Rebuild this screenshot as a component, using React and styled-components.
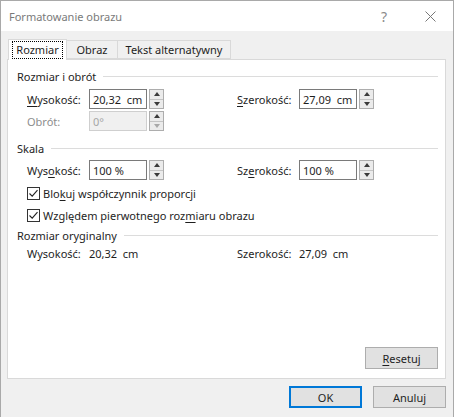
import React from 'react';
import styled, { createGlobalStyle } from 'styled-components';

const GlobalStyle = createGlobalStyle`
  html, body { margin: 0; padding: 0; background: #f0f0f0; }
  body { font-family: 'Noto Sans', 'Open Sans', sans-serif; font-size: 11px; color: #1e1e1e; }
`;

const Dialog = styled.div`
  width: 454px;
  height: 417px;
  box-sizing: border-box;
  border: 1px solid #a9a9a9;
  border-bottom: none;
  background: #f0f0f0;
  display: flex;
  flex-direction: column;
`;

const TitleBar = styled.div`
  height: 30px;
  background: #fff;
  display: flex;
  align-items: center;
  padding-left: 8px;
  color: #7a7a7a;
  font-size: 11px;
`;

const Title = styled.div`
  flex: 1;
`;

const TitleButton = styled.div`
  width: 46px;
  height: 30px;
  display: flex;
  align-items: center;
  justify-content: center;
  color: #8a8a8a;
  font-size: 14px;
`;

const Body = styled.div`
  flex: 1;
  padding: 7px 7px 0 6px;
  display: flex;
  flex-direction: column;
`;

const TabStrip = styled.div`
  display: flex;
  height: 21px;
  align-items: flex-end;
  padding-left: 1px;
`;

const Tab = styled.div`
  width: ${p => p.$w}px;
  height: ${p => (p.$active ? 21 : 19)}px;
  box-sizing: border-box;
  background: ${p => (p.$active ? '#fff' : '#f0f0f0')};
  border: 1px solid #d9d9d9;
  border-bottom: ${p => (p.$active ? 'none' : '1px solid #d9d9d9')};
  margin-left: ${p => (p.$active ? 0 : -1)}px;
  display: flex;
  align-items: center;
  justify-content: center;
  position: relative;
  z-index: ${p => (p.$active ? 1 : 0)};
  margin-bottom: ${p => (p.$active ? -1 : 0)}px;
`;

const FocusText = styled.span`
  outline: 1px dotted #000;
  padding: 0 3px;
  line-height: 16px;
`;

const Panel = styled.div`
  height: 320px;
  box-sizing: border-box;
  background: #fff;
  border: 1px solid #d9d9d9;
  padding: 8px 7px 0 9px;
  display: flex;
  flex-direction: column;
`;

const SectionHead = styled.div`
  display: flex;
  align-items: center;
  gap: 7px;
  height: 16px;
  margin-top: ${p => p.$top || 0}px;
  &::after {
    content: '';
    flex: 1;
    height: 1px;
    background: #dcdcdc;
  }
`;

const FieldRow = styled.div`
  display: grid;
  grid-template-columns: 62px 148px 62px auto;
  align-items: center;
  padding-left: 10px;
  height: 20px;
  margin-top: ${p => p.$top || 0}px;
`;

const Label = styled.span`
  color: ${p => (p.$disabled ? '#8d8d8d' : 'inherit')};
`;

const Key = styled.span`
  text-decoration: underline;
  text-underline-offset: 2px;
`;

const Spin = styled.div`
  display: flex;
  align-items: center;
  gap: 2px;
`;

const Input = styled.div`
  width: 58px;
  height: 20px;
  box-sizing: border-box;
  border: 1px solid ${p => (p.$disabled ? '#cfcfcf' : '#7a7a7a')};
  background: ${p => (p.$disabled ? '#f0f0f0' : '#fff')};
  color: ${p => (p.$disabled ? '#a6a6a6' : 'inherit')};
  padding-left: 3px;
  display: flex;
  align-items: center;
  white-space: pre;
`;

const Arrows = styled.div`
  width: 15px;
  height: 20px;
  box-sizing: border-box;
  border: 1px solid #adadad;
  background: #e5e5e5;
  display: flex;
  flex-direction: column;
`;

const ArrowHalf = styled.div`
  flex: 1;
  display: flex;
  align-items: center;
  justify-content: center;
  border-top: ${p => (p.$down ? '1px solid #c4c4c4' : 'none')};
  background: #ebebeb;
`;

const Triangle = styled.div`
  width: 0;
  height: 0;
  border-left: 3.5px solid transparent;
  border-right: 3.5px solid transparent;
  ${p => (p.$down ? 'border-top' : 'border-bottom')}: 4px solid ${p => (p.$dim ? '#a8a8a8' : '#3a3a3a')};
`;

const CheckRow = styled.div`
  display: flex;
  align-items: center;
  gap: 3px;
  padding-left: 10px;
  height: 14px;
  margin-top: ${p => p.$top || 0}px;
`;

const Box = styled.div`
  width: 13px;
  height: 13px;
  box-sizing: border-box;
  border: 1px solid #333;
  background: #fff;
  display: flex;
  align-items: center;
  justify-content: center;
`;

const InfoRow = styled.div`
  display: grid;
  grid-template-columns: 62px 148px 62px auto;
  padding-left: 10px;
  margin-top: ${p => p.$top || 0}px;
  white-space: pre;
`;

const Spacer = styled.div`
  flex: 1;
`;

const PanelFooter = styled.div`
  display: flex;
  justify-content: flex-end;
  padding-bottom: 9px;
`;

const Button = styled.div`
  width: 73px;
  height: 22px;
  box-sizing: border-box;
  border: ${p => (p.$primary ? '2px solid #0078d7' : '1px solid #adadad')};
  background: #e1e1e1;
  display: flex;
  align-items: center;
  justify-content: center;
`;

const Footer = styled.div`
  display: flex;
  justify-content: flex-end;
  gap: 11px;
  padding-top: 7px;
`;

const Spinner = ({ value, disabled }) => (
  <Spin>
    <Input $disabled={disabled}>{value}</Input>
    <Arrows>
      <ArrowHalf><Triangle /></ArrowHalf>
      <ArrowHalf $down><Triangle $down $dim={disabled} /></ArrowHalf>
    </Arrows>
  </Spin>
);

const Check = () => (
  <Box>
    <svg width="11" height="11" viewBox="0 0 11 11">
      <path d="M1.5 5.5 L4.2 8.2 L9.5 2.2" fill="none" stroke="#222" strokeWidth="1.1" />
    </svg>
  </Box>
);

export default function App() {
  return (
    <>
      <GlobalStyle />
      <Dialog>
        <TitleBar>
          <Title>Formatowanie obrazu</Title>
          <TitleButton>?</TitleButton>
          <TitleButton>
            <svg width="11" height="11" viewBox="0 0 11 11">
              <path d="M0.5 0.5 L10.5 10.5 M10.5 0.5 L0.5 10.5" stroke="#777" strokeWidth="1" />
            </svg>
          </TitleButton>
        </TitleBar>
        <Body>
          <TabStrip>
            <Tab $active $w={59}><FocusText>Rozmiar</FocusText></Tab>
            <Tab $w={52}>Obraz</Tab>
            <Tab $w={114}>Tekst alternatywny</Tab>
          </TabStrip>
          <Panel>
            <SectionHead>Rozmiar i obrót</SectionHead>
            <FieldRow $top={5}>
              <Label><Key>W</Key>ysokość:</Label>
              <Spinner value="20,32  cm" />
              <Label><Key>S</Key>zerokość:</Label>
              <Spinner value="27,09  cm" />
            </FieldRow>
            <FieldRow $top={2}>
              <Label $disabled>Obrót:</Label>
              <Spinner value="0°" disabled />
            </FieldRow>
            <SectionHead $top={9}>Skala</SectionHead>
            <FieldRow $top={4}>
              <Label>Wys<Key>o</Key>kość:</Label>
              <Spinner value="100 %" />
              <Label>Sz<Key>e</Key>rokość:</Label>
              <Spinner value="100 %" />
            </FieldRow>
            <CheckRow $top={6}>
              <Check />
              <span>Blo<Key>k</Key>uj współczynnik proporcji</span>
            </CheckRow>
            <CheckRow $top={8}>
              <Check />
              <span>Względem pierwotnego roz<Key>m</Key>iaru obrazu</span>
            </CheckRow>
            <SectionHead $top={5}>Rozmiar oryginalny</SectionHead>
            <InfoRow $top={3}>
              <span>Wysokość:</span>
              <span>20,32  cm</span>
              <span>Szerokość:</span>
              <span>27,09  cm</span>
            </InfoRow>
            <Spacer />
            <PanelFooter>
              <Button><span><Key>R</Key>esetuj</span></Button>
            </PanelFooter>
          </Panel>
          <Footer>
            <Button $primary>OK</Button>
            <Button>Anuluj</Button>
          </Footer>
        </Body>
      </Dialog>
    </>
  );
}
